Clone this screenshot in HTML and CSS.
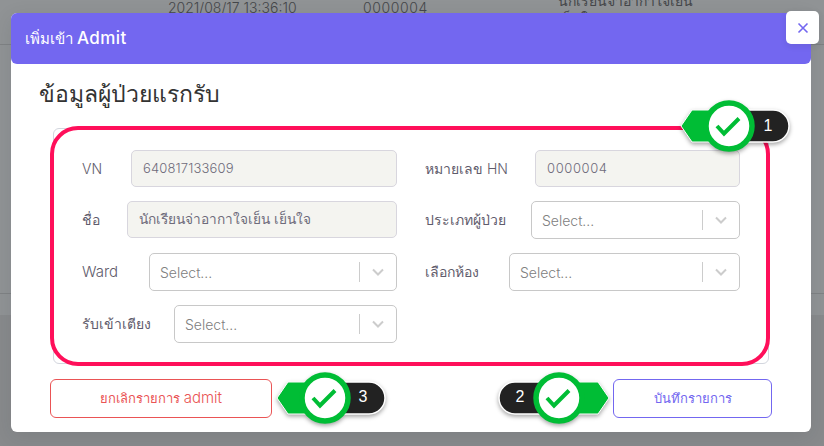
FILE: index.html
```html
<!DOCTYPE html>
<html lang="th">
<head>
<meta charset="utf-8">
<title>เพิ่มเข้า Admit</title>
<link rel="stylesheet" href="styles.css">
</head>
<body>
<div class="page">
  <div class="behind">
    <div class="behind-row">
      <span class="cell cell-date">2021/08/17 13:36:10</span>
      <span class="cell cell-hn">0000004</span>
      <span class="cell cell-name">นักเรียนจ่าอากาใจเย็น<br>เย็นใจ</span>
    </div>
    <div class="behind-row behind-row-tall"></div>
  </div>

  <div class="modal">
    <header class="modal-head"><span>เพิ่มเข้า <span class="lat-head">Admit</span></span></header>
    <button class="close" type="button" aria-label="close">
      <svg width="12" height="12" viewBox="0 0 12 12"><path d="M1.5 1.5l9 9M10.5 1.5l-9 9"/></svg>
    </button>
    <div class="modal-body">
      <h3 class="title">ข้อมูลผู้ป่วยแรกรับ</h3>
      <div class="card">
        <div class="grid">
          <div class="field l-vn"><label>VN</label><div class="input input-vn">640817133609</div></div>
          <div class="field l-hn"><label>หมายเลข HN</label><div class="input input-wide">0000004</div></div>
          <div class="field l-name"><label>ชื่อ</label><div class="input input-thai">นักเรียนจ่าอากาใจเย็น เย็นใจ</div></div>
          <div class="field l-type"><label>ประเภทผู้ป่วย</label>
            <div class="select"><span class="ph">Select...</span><span class="sep"></span><span class="ind"><svg width="14" height="8" viewBox="0 0 14 8"><path d="M2 1.5l5 5 5-5"/></svg></span></div></div>
          <div class="field l-ward"><label>Ward</label>
            <div class="select"><span class="ph">Select...</span><span class="sep"></span><span class="ind"><svg width="14" height="8" viewBox="0 0 14 8"><path d="M2 1.5l5 5 5-5"/></svg></span></div></div>
          <div class="field l-room"><label>เลือกห้อง</label>
            <div class="select"><span class="ph">Select...</span><span class="sep"></span><span class="ind"><svg width="14" height="8" viewBox="0 0 14 8"><path d="M2 1.5l5 5 5-5"/></svg></span></div></div>
          <div class="field l-bed"><label>รับเข้าเตียง</label>
            <div class="select"><span class="ph">Select...</span><span class="sep"></span><span class="ind"><svg width="14" height="8" viewBox="0 0 14 8"><path d="M2 1.5l5 5 5-5"/></svg></span></div></div>
        </div>
        <div class="highlight"></div>
      </div>
      <div class="actions">
        <button class="btn btn-cancel" type="button">ยกเลิกรายการ <span class="lat-btn">admit</span></button>
        <button class="btn btn-save" type="button">บันทึกรายการ</button>
      </div>
    </div>
  </div>

  <svg class="badge badge-1" width="120" height="64" viewBox="0 0 120 64">
    <g class="shape">
      <rect class="pill" x="50" y="14" width="63" height="32" rx="16"/>
      <path class="arrow" d="M5 30L16 14H53V46H16Z"/>
      <circle class="ring" cx="53" cy="30" r="23"/>
    </g>
    <path class="tick" d="M41 30l7 7.500 15-15"/>
    <text class="num" x="92" y="35">1</text>
  </svg>
  <svg class="badge badge-3" width="120" height="64" viewBox="0 0 120 64">
    <g class="shape">
      <rect class="pill" x="50" y="14" width="63" height="32" rx="16"/>
      <path class="arrow" d="M5 30L16 14H53V46H16Z"/>
      <circle class="ring" cx="53" cy="30" r="23"/>
    </g>
    <path class="tick" d="M41 30l7 7.500 15-15"/>
    <text class="num" x="91" y="34">3</text>
  </svg>
  <svg class="badge badge-2" width="120" height="64" viewBox="0 0 120 64">
    <g class="shape">
      <rect class="pill" x="5" y="14" width="63" height="32" rx="16"/>
      <path class="arrow" d="M115 30L104 14H65V46H104Z"/>
      <circle class="ring" cx="65" cy="30" r="23"/>
    </g>
    <path class="tick" d="M53 30l7 7.500 15-15"/>
    <text class="num" x="26" y="34">2</text>
  </svg>
</div>
</body>
</html>
```

FILE: styles.css
```css
* { box-sizing: border-box; }
html, body { margin: 0; padding: 0; }
body { font-family: Inter, "Noto Sans", "Liberation Sans", sans-serif; color: #6e6b7b; }

.page { position: relative; width: 824px; height: 446px; overflow: hidden; background: #888a8c; }

.behind { height: 315px; background: #909395; }
.behind-row { display: flex; height: 45px; border-bottom: 1px solid #7f8284; overflow: hidden; color: #45474a; font-size: 14px; font-weight: 300; }
.behind-row-tall { height: 249px; }
.cell { display: block; line-height: 14px; }
.cell-date { width: 195px; margin: 1px 0 0 168px; }
.cell-hn { width: 195px; margin-top: 1px; letter-spacing: .6px; }
.cell-name { margin-top: -8px; line-height: 18px; }

.modal { position: absolute; left: 11px; top: 13px; width: 800px; height: 419px; background: #fff; border-radius: 6px; box-shadow: 0 5px 20px rgba(34, 41, 47, .1); }
.modal-head { height: 51px; padding: 0 14px; display: flex; align-items: center; background: #7367f0; color: #fff; font-size: 15px; font-weight: 500; border-radius: 6px; }
.lat-head { font-size: 17px; letter-spacing: .4px; }
.close { position: absolute; left: 775px; top: -2px; width: 33px; height: 33px; padding: 0; border: 0; border-radius: 5px; background: #fff; display: flex; align-items: center; justify-content: center; box-shadow: 0 2px 6px rgba(34, 41, 47, .1); }
.close path { fill: none; stroke: #7367f0; stroke-width: 1.6; }

.modal-body { padding: 0 39px; }
.title { margin: 0 0 0 -11px; height: 64px; font-size: 23px; font-weight: 400; line-height: 60px; color: #333; }

.card { position: relative; margin: 0 3px; height: 236px; padding: 21px 28px; border: 1px solid #d3d6de; border-radius: 6px; }
.highlight { position: absolute; left: -4px; top: -3px; width: 720px; height: 240px; border: 4px solid #ff0f5a; border-radius: 28px; pointer-events: none; }

.grid { display: grid; grid-template-columns: 315px 315px; column-gap: 28px; row-gap: 14px; align-items: start; }
.field { display: flex; align-items: flex-start; font-size: 14px; font-weight: 300; }
.field label { flex: none; height: 37px; line-height: 37px; color: #5f5c6c; }
.l-vn label { width: 49px; }
.l-hn label { width: 110px; }
.l-name label { width: 45px; }
.l-type label { width: 106px; }
.l-ward label { width: 67px; font-size: 15px; }
.l-room label { width: 84px; }
.l-bed label { width: 92px; }

.input { flex: 1; height: 37px; padding: 0 11px; line-height: 35px; font-size: 13px; color: #6e6b7b; background: #f4f4f0; border: 1px solid #d8d6de; border-radius: 5px; }
.input-vn { letter-spacing: .15px; }
.input-wide { letter-spacing: .6px; }
.input-thai { font-size: 13.7px; }
.select { flex: 1; height: 38px; display: flex; align-items: center; padding-left: 10px; background: #fff; border: 1px solid #c8c8c8; border-radius: 5px; }
.ph { flex: 1; font-size: 14px; color: #808080; }
.sep { width: 1px; height: 20px; background: #ccc; }
.ind { width: 36px; display: flex; justify-content: center; align-items: center; }
.ind path { fill: none; stroke: #ccc; stroke-width: 2; }

.actions { display: flex; justify-content: space-between; margin-top: 15px; }
.btn { height: 39px; padding: 0; background: #fff; border: 1px solid; border-radius: 6px; font-family: inherit; font-size: 13px; }
.lat-btn { font-size: 15px; font-weight: 300; }
.btn-cancel { width: 222px; color: #ea5455; border-color: #ea5455; }
.btn-save { width: 159px; color: #7367f0; border-color: #7367f0; }

.badge { position: absolute; overflow: visible; }
.badge-1 { left: 676px; top: 96px; }
.badge-3 { left: 272px; top: 368px; }
.badge-2 { left: 494px; top: 368px; }
.shape { filter: drop-shadow(0 2px 2px rgba(0, 0, 0, .35)); }
.pill { fill: #222; stroke: #fff; stroke-width: 1.500; }
.arrow { fill: #00bd35; stroke: #fff; stroke-width: 1; }
.ring { fill: #fff; stroke: #00bd35; stroke-width: 5.500; }
.tick { fill: none; stroke: #00bd35; stroke-width: 4; }
.num { fill: #fff; font-family: "Liberation Sans", sans-serif; font-size: 16px; text-anchor: middle; }
```
